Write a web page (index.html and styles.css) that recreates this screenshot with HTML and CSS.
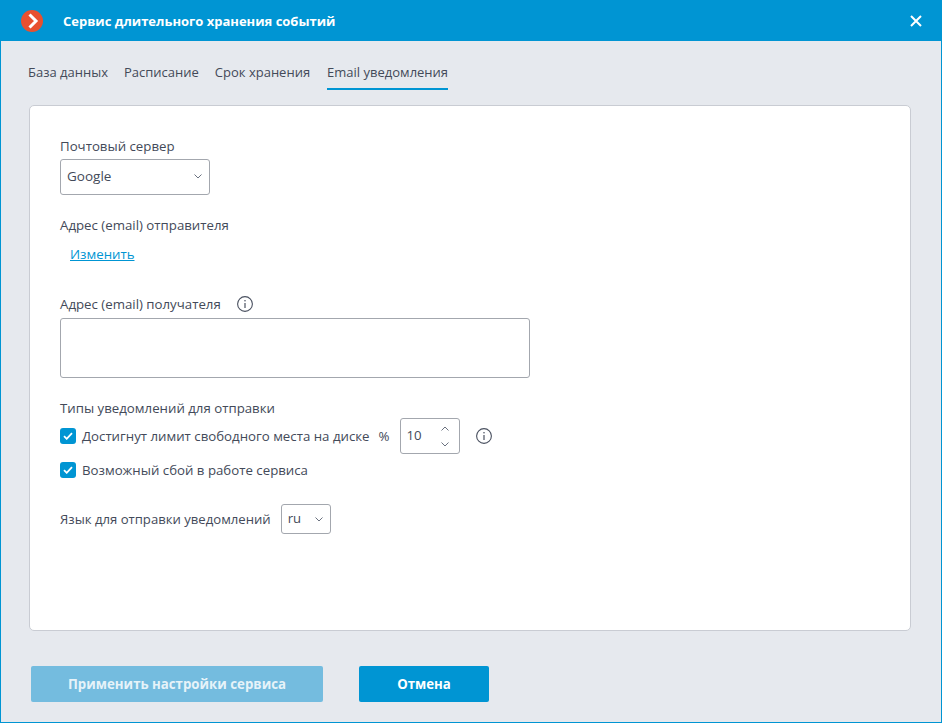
FILE: index.html
```html
<!DOCTYPE html>
<html lang="ru">
<head>
    <meta charset="UTF-8">
    <title>Сервис длительного хранения событий</title>
    <link rel="stylesheet" href="styles.css">
</head>
<body>
    <div class="window">
        <div class="titlebar">
            <svg class="logo" width="22" height="22" viewBox="0 0 22 22">
                <circle cx="11" cy="11" r="11" fill="#e8502f"/>
                <path d="M8.5 4.5 L15 11 L8.5 17.5" fill="none" stroke="#fff" stroke-width="3"/>
            </svg>
            <span class="title">Сервис длительного хранения событий</span>
            <svg class="close" width="12" height="12" viewBox="0 0 12 12">
                <path d="M1 1 L11 11 M11 1 L1 11" stroke="#fff" stroke-width="2"/>
            </svg>
        </div>

        <div class="tabs">
            <span class="tab">База данных</span>
            <span class="tab">Расписание</span>
            <span class="tab">Срок хранения</span>
            <span class="tab active">Email уведомления</span>
        </div>

        <div class="panel">
            <div class="label">Почтовый сервер</div>
            <div class="select select-server">
                <span>Google</span>
                <svg class="chevron" width="8" height="5" viewBox="0 0 8 5"><path d="M0.5 0.5 L4 4 L7.5 0.5" fill="none" stroke="#6b7280"/></svg>
            </div>

            <div class="label label-sender">Адрес (email) отправителя</div>
            <a class="link" href="#">Изменить</a>

            <div class="label label-recipient">
                Адрес (email) получателя
                <svg class="info" width="16" height="16" viewBox="0 0 16 16">
                    <circle cx="8" cy="8" r="7.4" fill="none" stroke="#4a5160" stroke-width="1.1"/>
                    <path d="M8 7 V12" stroke="#4a5160" stroke-width="1.2"/>
                    <circle cx="8" cy="4.7" r="0.8" fill="#4a5160"/>
                </svg>
            </div>
            <div class="textarea"></div>

            <div class="label label-types">Типы уведомлений для отправки</div>
            <div class="check-row">
                <span class="checkbox"><svg width="10" height="8" viewBox="0 0 10 8"><path d="M1 4.2 L3.7 6.8 L9 1.2" fill="none" stroke="#fff" stroke-width="1.8"/></svg></span>
                <span>Достигнут лимит свободного места на диске</span>
                <span class="percent">%</span>
                <div class="spinner">
                    <span class="spinner-value">10</span>
                    <div class="arrows">
                        <svg width="8" height="5" viewBox="0 0 8 5"><path d="M0.5 4.5 L4 1 L7.5 4.5" fill="none" stroke="#6b7280"/></svg>
                        <svg width="8" height="5" viewBox="0 0 8 5"><path d="M0.5 0.5 L4 4 L7.5 0.5" fill="none" stroke="#6b7280"/></svg>
                    </div>
                </div>
                <svg class="info info-limit" width="16" height="16" viewBox="0 0 16 16">
                    <circle cx="8" cy="8" r="7.4" fill="none" stroke="#4a5160" stroke-width="1.1"/>
                    <path d="M8 7 V12" stroke="#4a5160" stroke-width="1.2"/>
                    <circle cx="8" cy="4.7" r="0.8" fill="#4a5160"/>
                </svg>
            </div>
            <div class="check-row check-row-second">
                <span class="checkbox"><svg width="10" height="8" viewBox="0 0 10 8"><path d="M1 4.2 L3.7 6.8 L9 1.2" fill="none" stroke="#fff" stroke-width="1.8"/></svg></span>
                <span>Возможный сбой в работе сервиса</span>
            </div>

            <div class="lang-row">
                <span>Язык для отправки уведомлений</span>
                <div class="select select-lang">
                    <span class="select-value">ru</span>
                    <svg class="chevron" width="8" height="5" viewBox="0 0 8 5"><path d="M0.5 0.5 L4 4 L7.5 0.5" fill="none" stroke="#6b7280"/></svg>
                </div>
            </div>
        </div>

        <div class="buttons">
            <button class="btn btn-apply">Применить настройки сервиса</button>
            <button class="btn btn-cancel">Отмена</button>
        </div>
    </div>
</body>
</html>
```

FILE: styles.css
```css
* {
    box-sizing: border-box;
}
body {
    margin: 0;
    font-family: "Open Sans", "Noto Sans", sans-serif;
    font-size: 13px;
    color: #434a59;
}
.window {
    width: 942px;
    height: 723px;
    background-color: #e6e9ee;
    border: 1px solid #0095d3;
    border-top: none;
}
.titlebar {
    height: 41px;
    background-color: #0095d3;
    display: flex;
    align-items: center;
    padding: 0 19px 0 20px;
    color: white;
}
.title {
    margin-left: 20px;
    font-weight: 700;
}
.close {
    margin-left: auto;
}
.tabs {
    display: flex;
    gap: 16px;
    padding: 22px 0 0 27px;
    height: 64px;
}
.tab {
    height: 27px;
    line-height: 19px;
    white-space: nowrap;
}
.tab.active {
    margin-left: 1px;
    border-bottom: 2px solid #0095d3;
}
.panel {
    margin-left: 28px;
    width: 882px;
    height: 526px;
    background-color: white;
    border: 1px solid #c9ccd3;
    border-radius: 5px;
    padding: 30px 30px 0;
    font-size: 13.25px;
}
.label {
    line-height: 20px;
}
.select {
    border: 1px solid #a3a7ae;
    border-radius: 3px;
    display: flex;
    align-items: center;
    justify-content: space-between;
    background-color: white;
}
.select-server {
    width: 150px;
    height: 36px;
    margin-top: 3px;
    padding: 0 7px 2px 6px;
    font-size: 13.5px;
}
.label-sender {
    margin-top: 20px;
}
.link {
    display: block;
    margin: 9px 0 0 10px;
    line-height: 20px;
    color: #0095d3;
}
.label-recipient {
    margin-top: 30px;
    display: flex;
    align-items: center;
    gap: 16px;
}
.textarea {
    width: 470px;
    height: 60px;
    margin-top: 4px;
    border: 1px solid #a3a7ae;
    border-radius: 3px;
}
.label-types {
    margin-top: 20px;
}
.check-row {
    display: flex;
    align-items: center;
    height: 36px;
}
.check-row-second {
    height: 22px;
    margin-top: 5px;
}
.checkbox {
    width: 16px;
    height: 16px;
    margin-right: 6px;
    background-color: #0095d3;
    border-radius: 3px;
    display: flex;
    align-items: center;
    justify-content: center;
}
.percent {
    margin-left: 9px;
}
.spinner {
    width: 60px;
    height: 36px;
    margin-left: 10px;
    padding: 0 10px 0 6px;
    border: 1px solid #a3a7ae;
    border-radius: 3px;
    display: flex;
    align-items: center;
    justify-content: space-between;
}
.spinner-value {
    margin-bottom: 2px;
}
.arrows {
    display: flex;
    flex-direction: column;
    gap: 11px;
}
.arrows svg {
    display: block;
}
.info-limit {
    margin-left: 16px;
}
.lang-row {
    display: flex;
    align-items: center;
    gap: 10px;
    margin-top: 23px;
    font-size: 13.13px;
}
.select-lang {
    width: 50px;
    height: 30px;
    padding: 0 7px 0 6px;
}
.select-value {
    margin-bottom: 2px;
}
.buttons {
    display: flex;
    gap: 36px;
    padding: 35px 0 0 30px;
}
.btn {
    height: 36px;
    border: none;
    border-radius: 2px;
    color: white;
    font-family: inherit;
    font-size: 13.25px;
    font-weight: 700;
}
.btn-apply {
    width: 292px;
    background-color: #74bcdf;
    color: #e6f3f9;
}
.btn-cancel {
    width: 130px;
    background-color: #0095d3;
}
```
